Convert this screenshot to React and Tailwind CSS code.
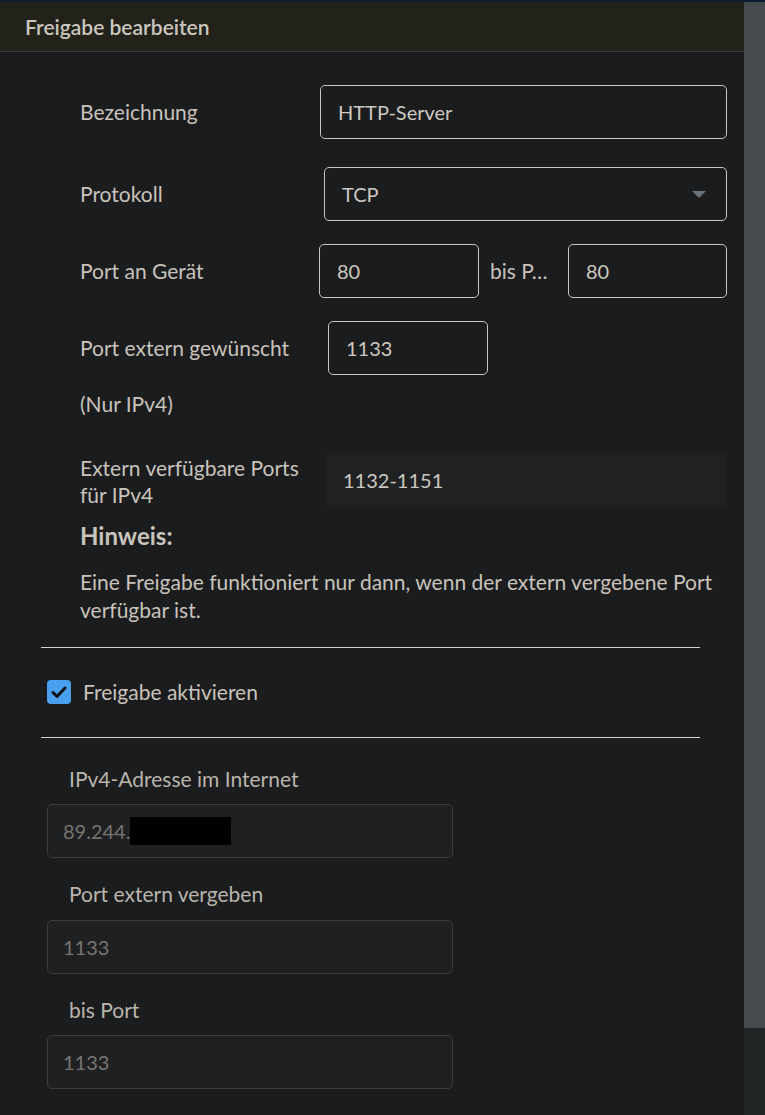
const field = 'h-[54px] rounded-[5px] border border-[#cbc6bd] bg-[#1b1c1e] flex items-center px-[17px] text-[20px] text-[#cdc8c0]'
const disabledField = 'ml-[47px] w-[406px] h-[54px] rounded-[5px] border border-[#3d3d3a] bg-[#1f2022] flex items-center px-[15px] text-[20px] text-[#77746f]'

function Row({ label, children, className = '' }) {
    return (
        <div className={`flex items-center ${className}`}>
            <div className="w-[320px] pl-[80px]">{label}</div>
            {children}
        </div>
    )
}

function App() {
    return (
        <div className="w-[765px] h-[1115px] bg-[#1b1c1e] flex flex-col overflow-hidden text-[21px] text-[#c8c3bb] font-['Lato','Noto_Sans',sans-serif]">
            <div className="h-[2px] bg-[#0e1d2c]" />
            <div className="flex flex-1">
                <div className="w-[744px] flex flex-col">
                    <div className="h-[50px] bg-[#22221b] border-b border-[#3b3e41] pl-[25px] flex items-center text-[21px] font-semibold text-[#cbc6be]">
                        Freigabe bearbeiten
                    </div>

                    <Row label="Bezeichnung" className="mt-[33px]">
                        <div className={`w-[407px] ${field}`}>HTTP-Server</div>
                    </Row>

                    <Row label="Protokoll" className="mt-[28px]">
                        <div className={`ml-[4px] w-[403px] justify-between pr-[20px] ${field}`}>
                            <span>TCP</span>
                            <svg width="14" height="7" viewBox="0 0 14 7">
                                <path d="M0 0 L14 0 L7 7 Z" fill="#6b737c" />
                            </svg>
                        </div>
                    </Row>

                    <div className="flex items-center mt-[23px]">
                        <div className="w-[319px] pl-[80px] whitespace-nowrap">Port an Gerät</div>
                        <div className={`w-[160px] ${field}`}>80</div>
                        <div className="w-[89px] pl-[11px] whitespace-nowrap">bis P…</div>
                        <div className={`w-[159px] ${field}`}>80</div>
                    </div>

                    <div className="flex items-center mt-[23px]">
                        <div className="w-[328px] pl-[80px] whitespace-nowrap">Port extern gewünscht</div>
                        <div className={`w-[160px] ${field}`}>1133</div>
                    </div>

                    <div className="mt-[15px] pl-[80px] leading-[28px]">(Nur IPv4)</div>

                    <div className="flex items-start mt-[35px]">
                        <div className="w-[326px] pl-[80px] pt-[1px] leading-[27px]">
                            Extern verfügbare Ports
                            <br />
                            für IPv4
                        </div>
                        <div className="w-[401px] h-[54px] rounded-[5px] bg-[#1f2123] flex items-center px-[17px] text-[20px] text-[#cdc8c0]">
                            1132-1151
                        </div>
                    </div>

                    <div className="mt-[14px] pl-[80px] text-[24px] font-bold leading-[28px]">Hinweis:</div>

                    <p className="mt-[18px] pl-[80px] pr-[20px] leading-[28px]">
                        Eine Freigabe funktioniert nur dann, wenn der extern vergebene Port verfügbar ist.
                    </p>

                    <div className="mt-[23px] ml-[41px] w-[659px] h-px bg-[#d6d3ce]" />

                    <label className="mt-[32px] ml-[47px] flex items-center gap-[12px] h-[24px]">
                        <span className="w-[24px] h-[24px] rounded-[4px] bg-[#4aa0f0] flex items-center justify-center">
                            <svg width="16" height="13" viewBox="0 0 16 13">
                                <path d="M2 6.5 L6 10.5 L14 2" fill="none" stroke="#121212" strokeWidth="3" strokeLinecap="round" strokeLinejoin="round" />
                            </svg>
                        </span>
                        Freigabe aktivieren
                    </label>

                    <div className="mt-[33px] ml-[41px] w-[659px] h-px bg-[#d6d3ce]" />

                    <div className="mt-[29px] ml-[69px] leading-[24px] text-[#b9b4ac]">IPv4-Adresse im Internet</div>
                    <div className={`mt-[13px] ${disabledField}`}>
                        <span>89.244.</span>
                        <span className="w-[101px] h-[28px] bg-black" />
                    </div>

                    <div className="mt-[24px] ml-[69px] leading-[24px] text-[#b9b4ac]">Port extern vergeben</div>
                    <div className={`mt-[14px] ${disabledField}`}>1133</div>

                    <div className="mt-[24px] ml-[69px] leading-[24px] text-[#b9b4ac]">bis Port</div>
                    <div className={`mt-[13px] ${disabledField}`}>1133</div>
                </div>
                <div className="w-[21px] flex flex-col">
                    <div className="h-[1026px] bg-[#454b4d]" />
                    <div className="flex-1 bg-[#202526]" />
                </div>
            </div>
        </div>
    )
}

export default App
